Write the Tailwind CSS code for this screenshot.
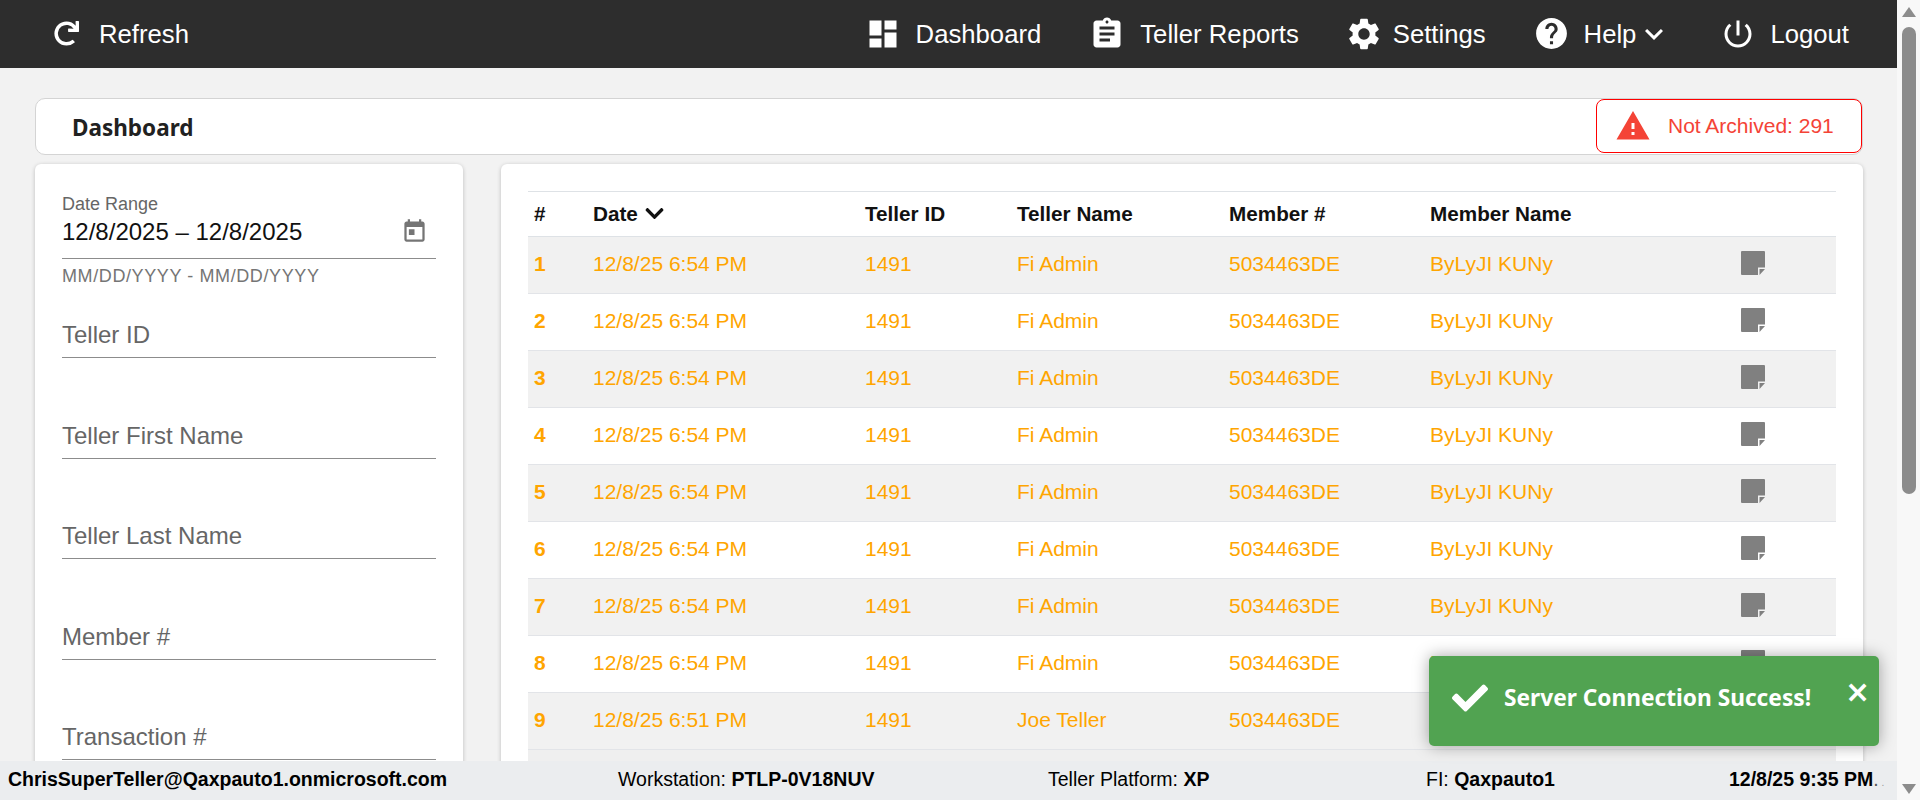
<!DOCTYPE html>
<html lang="en">
<head>
  <meta charset="UTF-8" />
  <title>Dashboard</title>
  <script src="https://cdn.jsdelivr.net/npm/@tailwindcss/browser@4"></script>
</head>
<body class="h-[800px] overflow-hidden bg-[#f2f2f2] font-['Liberation_Sans',Arial,sans-serif]">
  <div class="flex h-[800px]">
    <div class="relative w-[1897px] h-[800px] overflow-hidden">

      <!-- top nav -->
      <nav class="flex items-center h-[68px] bg-[#2d2d2d] text-white text-[25.7px] pl-[50px] pr-[48px]">
        <div class="flex items-center gap-[20px]">
          <svg class="w-[25px] h-[25px] ml-[4px]" viewBox="0 0 512 512" fill="currentColor"><path d="M500.33 0h-47.41a12 12 0 0 0-12 12.57l4 82.76A247.42 247.42 0 0 0 256 8C119.34 8 7.9 119.53 8 256.19 8.1 393.07 119.1 504 256 504a247.1 247.1 0 0 0 166.18-63.91 12 12 0 0 0 .48-17.43l-34-34a12 12 0 0 0-16.38-.55A176 176 0 1 1 402.1 157.8l-101.53-4.87a12 12 0 0 0-12.57 12v47.41a12 12 0 0 0 12 12h200.33a12 12 0 0 0 12-12V12a12 12 0 0 0-12-12z"/></svg>
          <span>Refresh</span>
        </div>
        <div class="flex items-center ml-auto">
          <div class="flex items-center gap-[15px]">
            <svg class="w-[36px] h-[36px]" viewBox="0 0 24 24" fill="currentColor"><path d="M3 13h8V3H3v10zm0 8h8v-6H3v6zm10 0h8V11h-8v10zm0-18v6h8V3h-8z"/></svg>
            <span>Dashboard</span>
          </div>
          <div class="flex items-center gap-[15px] ml-[48px]">
            <svg class="w-[36px] h-[36px]" viewBox="0 0 24 24" fill="currentColor"><path d="M19 3h-4.18C14.4 1.84 13.3 1 12 1c-1.3 0-2.4.84-2.82 2H5c-1.1 0-2 .9-2 2v14c0 1.1.9 2 2 2h14c1.1 0 2-.9 2-2V5c0-1.1-.9-2-2-2zm-7 0c.55 0 1 .45 1 1s-.45 1-1 1-1-.45-1-1 .45-1 1-1zm2 14H7v-2h7v2zm3-4H7v-2h10v2zm0-4H7V7h10v2z"/></svg>
            <span>Teller Reports</span>
          </div>
          <div class="flex items-center gap-[10px] ml-[46px]">
            <svg class="w-[38px] h-[38px]" viewBox="0 0 24 24" fill="currentColor"><path d="M19.14 12.94c.04-.3.06-.61.06-.94 0-.32-.02-.64-.07-.94l2.03-1.58c.18-.14.23-.41.12-.61l-1.92-3.32c-.12-.22-.37-.29-.59-.22l-2.39.96c-.5-.38-1.03-.7-1.62-.94l-.36-2.54c-.04-.24-.24-.41-.48-.41h-3.84c-.24 0-.43.17-.47.41l-.36 2.54c-.59.24-1.13.57-1.62.94l-2.39-.96c-.22-.08-.47 0-.59.22L2.74 8.87c-.12.21-.08.47.12.61l2.03 1.58c-.05.3-.09.63-.09.94s.02.64.07.94l-2.03 1.58c-.18.14-.23.41-.12.61l1.92 3.32c.12.22.37.29.59.22l2.39-.96c.5.38 1.03.7 1.62.94l.36 2.54c.05.24.24.41.48.41h3.84c.24 0 .44-.17.47-.41l.36-2.54c.59-.24 1.13-.56 1.62-.94l2.39.96c.22.08.47 0 .59-.22l1.92-3.32c.12-.22.07-.47-.12-.61l-2.01-1.58zM12 15.6c-1.98 0-3.6-1.62-3.6-3.6s1.62-3.6 3.6-3.6 3.6 1.62 3.6 3.6-1.62 3.6-3.6 3.6z"/></svg>
            <span>Settings</span>
          </div>
          <div class="flex items-center ml-[47px]">
            <svg class="w-[37px] h-[37px] mr-[14px]" viewBox="0 0 24 24" fill="currentColor"><path d="M12 2C6.48 2 2 6.48 2 12s4.48 10 10 10 10-4.48 10-10S17.52 2 12 2zm1 17h-2v-2h2v2zm2.07-7.75l-.9.92C13.45 12.9 13 13.5 13 15h-2v-.5c0-1.1.45-2.1 1.17-2.83l1.24-1.26c.37-.36.59-.86.59-1.41 0-1.1-.9-2-2-2s-2 .9-2 2H8c0-2.21 1.79-4 4-4s4 1.79 4 4c0 .88-.36 1.68-.93 2.25z"/></svg>
            <span>Help</span>
            <svg class="w-[36px] h-[36px]" viewBox="0 0 24 24" fill="currentColor"><path d="M16.59 8.59L12 13.17 7.41 8.59 6 10l6 6 6-6z"/></svg>
          </div>
          <div class="flex items-center gap-[14px] ml-[48px]">
            <svg class="w-[36px] h-[36px]" viewBox="0 0 24 24" fill="currentColor"><path d="M13 3h-2v10h2V3zm4.83 2.17l-1.42 1.42C17.99 7.86 19 9.81 19 12c0 3.87-3.13 7-7 7s-7-3.13-7-7c0-2.19 1.01-4.14 2.58-5.42L6.17 5.17C4.23 6.82 3 9.26 3 12c0 4.97 4.03 9 9 9s9-4.03 9-9c0-2.74-1.23-5.18-3.17-6.83z"/></svg>
            <span>Logout</span>
          </div>
        </div>
      </nav>

      <main class="pl-[35px] pt-[30px] w-[1863px]">
        <!-- page header -->
        <div class="flex items-center justify-between h-[57px] bg-white border border-[#d4d4d4] rounded-[10px] pl-[36px]">
          <h1 class="font-['Noto_Sans',sans-serif] font-bold text-[22.5px] text-[#212121] pt-[2px]">Dashboard</h1>
          <div class="flex items-center w-[266px] h-[54px] -mt-[1px] bg-white border border-[#ff0000] rounded-[8px] pl-[18px] text-[21px] text-[#f44336]">
            <svg class="w-[36px] h-[36px]" viewBox="0 0 24 24" fill="currentColor"><path d="M1 21h22L12 2 1 21zm12-3h-2v-2h2v2zm0-4h-2v-4h2v4z"/></svg>
            <span class="ml-[17px]">Not Archived: 291</span>
          </div>
        </div>

        <div class="flex items-start gap-[38px] mt-[9px]">
          <!-- filters -->
          <aside class="w-[428px] shrink-0 h-[700px] bg-white rounded-[6px] shadow-[0_1px_4px_rgba(0,0,0,0.22)] px-[27px] pt-[30px]">
            <div class="text-[18px] leading-[21px] text-[#666]">Date Range</div>
            <div class="flex items-center justify-between h-[44px] border-b border-[#8c8c8c] pb-[10px] pr-[8px] text-[24px] text-[#111]">
              <span>12/8/2025 – 12/8/2025</span>
              <svg class="w-[27px] h-[27px]" viewBox="0 0 24 24" fill="#757575"><path d="M19 3h-1V1h-2v2H8V1H6v2H5c-1.11 0-1.99.9-1.99 2L3 19c0 1.1.89 2 2 2h14c1.1 0 2-.9 2-2V5c0-1.1-.9-2-2-2zm0 16H5V8h14v11zM7 10h5v5H7z"/></svg>
            </div>
            <div class="mt-[7px] text-[18px] leading-[21px] tracking-[0.6px] text-[#757575]">MM/DD/YYYY - MM/DD/YYYY</div>
            <div class="h-[71px] flex items-end border-b border-[#8c8c8c] pb-[4px] text-[24px] text-[#666]">Teller ID</div>
            <div class="h-[101px] flex items-end border-b border-[#8c8c8c] pb-[4px] text-[24px] text-[#666]">Teller First Name</div>
            <div class="h-[100px] flex items-end border-b border-[#8c8c8c] pb-[4px] text-[24px] text-[#666]">Teller Last Name</div>
            <div class="h-[101px] flex items-end border-b border-[#8c8c8c] pb-[4px] text-[24px] text-[#666]">Member #</div>
            <div class="h-[100px] flex items-end border-b border-[#8c8c8c] pb-[4px] text-[24px] text-[#666]">Transaction #</div>
          </aside>

          <!-- transactions -->
          <section class="w-[1362px] h-[700px] bg-white rounded-[6px] shadow-[0_1px_4px_rgba(0,0,0,0.22)] px-[27px] pt-[27px]">
            <table class="table-fixed w-[1308px] border-collapse text-left text-[21px]">
              <colgroup>
                <col class="w-[59px]" /><col class="w-[272px]" /><col class="w-[152px]" /><col class="w-[212px]" /><col class="w-[201px]" /><col class="w-[311px]" /><col class="w-[101px]" />
              </colgroup>
              <thead class="text-[20.7px] font-bold text-[#111]">
                <tr class="h-[45px] border-y border-[#dee2e6]">
                  <th class="px-[6px]">#</th>
                  <th class="px-[6px]">
                    <span class="flex items-center gap-[6px]">Date
                      <svg class="w-[21px] h-[21px]" viewBox="0 0 448 512" fill="currentColor"><path d="M207.029 381.476L12.686 187.132c-9.373-9.373-9.373-24.569 0-33.941l22.667-22.667c9.357-9.357 24.522-9.375 33.901-.04L224 284.505l154.745-154.021c9.379-9.335 24.544-9.317 33.901.04l22.667 22.667c9.373 9.373 9.373 24.569 0 33.941L240.971 381.476c-9.373 9.372-24.569 9.372-33.942 0z"/></svg>
                    </span>
                  </th>
                  <th class="px-[6px]">Teller ID</th>
                  <th class="px-[6px]">Teller Name</th>
                  <th class="px-[6px]">Member #</th>
                  <th class="px-[6px]">Member Name</th>
                  <th></th>
                </tr>
              </thead>
              <tbody id="rows" class="text-[#ffa500]"></tbody>
            </table>
          </section>
        </div>
      </main>

      <!-- status bar -->
      <footer class="absolute left-0 bottom-0 flex items-center w-full h-[39px] bg-[#ebedef] pl-[8px] pb-[2px] text-[19.5px] text-black">
        <div class="w-[610px] font-bold">ChrisSuperTeller@Qaxpauto1.onmicrosoft.com</div>
        <div class="w-[430px]">Workstation: <b>PTLP-0V18NUV</b></div>
        <div class="w-[378px]">Teller Platform: <b>XP</b></div>
        <div class="w-[303px]">FI: <b>Qaxpauto1</b></div>
        <div class="whitespace-nowrap font-bold">12/8/25 9:35 PM<span class="font-normal text-[#555]">.</span><span class="text-[10px] font-normal text-[#999]"> .</span></div>
      </footer>

      <!-- toast -->
      <div class="absolute left-[1429px] bottom-[54px] w-[450px] h-[90px] flex items-start bg-[#51a351] rounded-[5px] shadow-[0_0_16px_rgba(0,0,0,0.35)] pl-[23px] pt-[24px] text-white">
        <svg class="w-[36px] h-[36px]" viewBox="0 0 512 512" fill="currentColor"><path d="M173.898 439.404l-166.4-166.4c-9.997-9.997-9.997-26.206 0-36.204l36.203-36.204c9.997-9.998 26.207-9.998 36.204 0L192 312.69 432.095 72.596c9.997-9.997 26.207-9.997 36.204 0l36.203 36.204c9.997 9.997 9.997 26.206 0 36.204l-294.4 294.401c-9.998 9.997-26.207 9.997-36.204-.001z"/></svg>
        <span class="ml-[16px] font-['Noto_Sans',sans-serif] font-bold text-[22.7px] leading-[36px] whitespace-nowrap">Server Connection Success!</span>
        <span class="ml-[34px] -mt-[6px] font-['DejaVu_Sans',sans-serif] font-bold text-[30px] leading-[36px]">×</span>
      </div>
    </div>

    <!-- scrollbar -->
    <div class="relative w-[23px] h-[800px] bg-[#f8f8f8]">
      <svg class="absolute top-[7px] left-[5px] w-[14px] h-[10px]" viewBox="0 0 14 10" fill="#8c8c8c"><path d="M7 0L14 10H0z"/></svg>
      <div class="absolute top-[27px] left-[5px] w-[14px] h-[467px] bg-[#8c8c8c] rounded-full"></div>
      <svg class="absolute bottom-[6px] left-[5px] w-[14px] h-[10px]" viewBox="0 0 14 10" fill="#8c8c8c"><path d="M7 10L14 0H0z"/></svg>
    </div>
  </div>

  <script>
    const rows = [
      ['12/8/25 6:54 PM', 'Fi Admin'], ['12/8/25 6:54 PM', 'Fi Admin'], ['12/8/25 6:54 PM', 'Fi Admin'],
      ['12/8/25 6:54 PM', 'Fi Admin'], ['12/8/25 6:54 PM', 'Fi Admin'], ['12/8/25 6:54 PM', 'Fi Admin'],
      ['12/8/25 6:54 PM', 'Fi Admin'], ['12/8/25 6:54 PM', 'Fi Admin'], ['12/8/25 6:51 PM', 'Joe Teller'],
    ];
    document.getElementById('rows').innerHTML = rows.map((r, i) => `
      <tr class="h-[57px] border-b border-[#e2e4e8] ${i % 2 === 0 ? 'bg-[#f1f1f1]' : 'bg-white'}">
        <td class="px-[6px] pb-[2px] font-bold">${i + 1}</td>
        <td class="px-[6px] pb-[2px]">${r[0]}</td>
        <td class="px-[6px] pb-[2px]">1491</td>
        <td class="px-[6px] pb-[2px]">${r[1]}</td>
        <td class="px-[6px] pb-[2px]">5034463DE</td>
        <td class="px-[6px] pb-[2px]">ByLyJI KUNy</td>
        <td class="pl-[6px] pb-[2px]">
          <svg class="w-[24px] h-[24px] -mt-[2px]" viewBox="0 0 24 24" fill="#808080"><path d="M1 0H23a1 1 0 0 1 1 1V16.5H17V24H1a1 1 0 0 1-1-1V1a1 1 0 0 1 1-1z"/><path d="M18.5 18H24L18.5 24z"/></svg>
        </td>
      </tr>`).join('') + '<tr class="h-[57px] bg-[#efefef]"><td colspan="7"></td></tr>';
  </script>
</body>
</html>
